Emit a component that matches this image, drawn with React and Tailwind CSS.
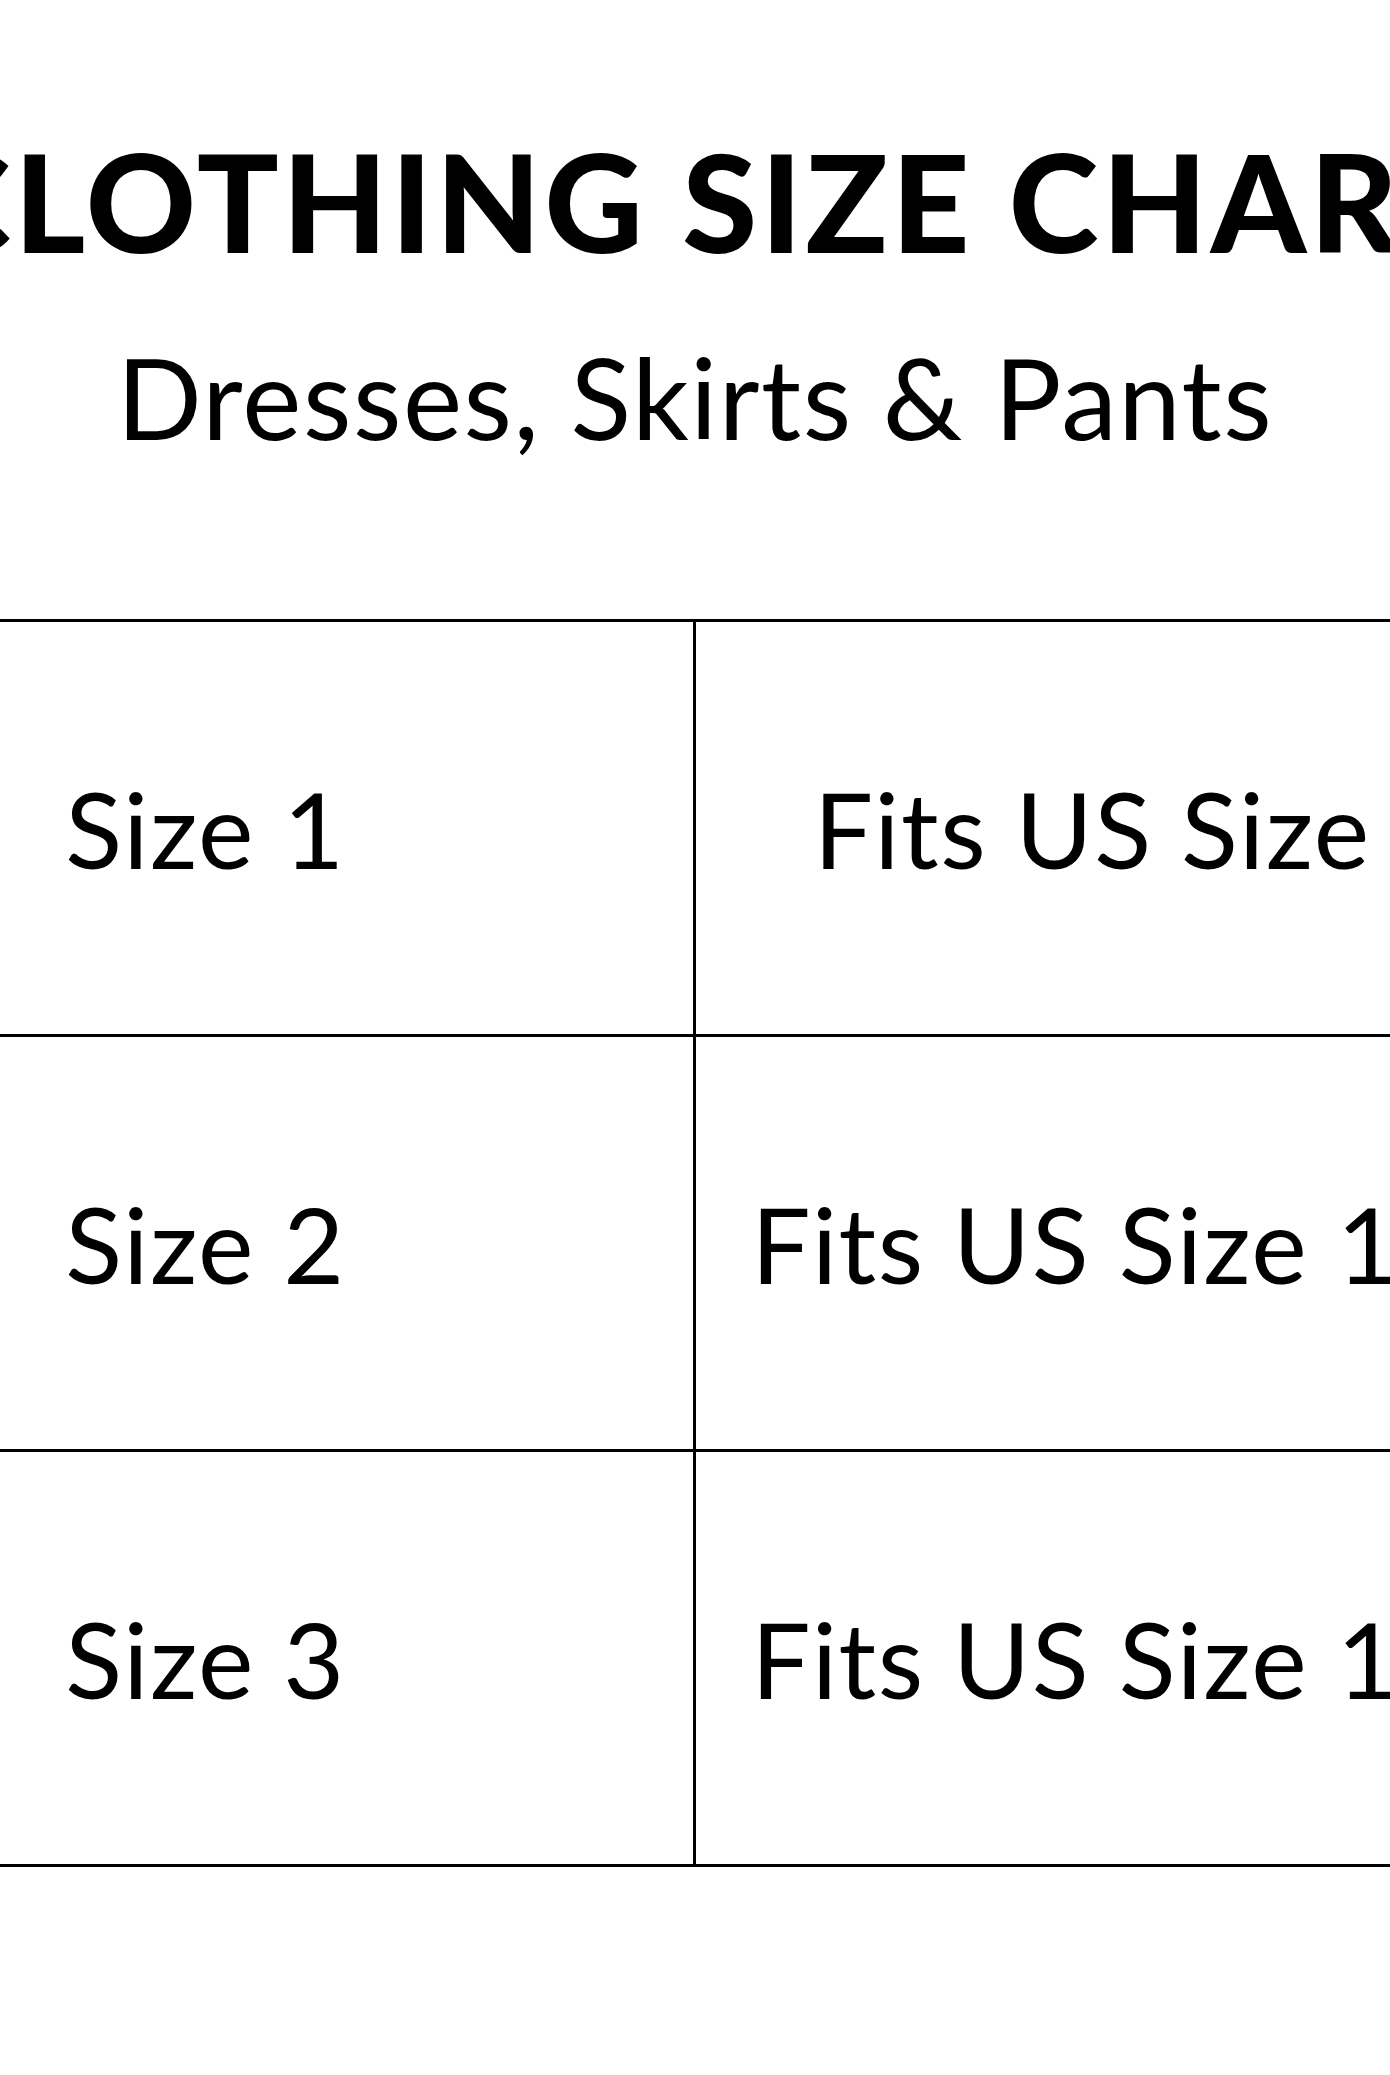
import React from 'react'

const rows = [
    { size: "Size 1", fits: "Fits US Size 4-8" },
    { size: "Size 2", fits: "Fits US Size 10-14" },
    { size: "Size 3", fits: "Fits US Size 16-20" },
];

const App = () => {
    return (
        <div className="w-[1390px] h-[2075px] bg-white text-black overflow-hidden font-['Lato','Liberation_Sans',sans-serif]">
            {/* Encabezado */}
            <div className="flex justify-center pt-[133px] pl-[16px]">
                <h1 className="flex-none whitespace-nowrap text-[136px] leading-[136px] font-black tracking-[3.5px]">
                    CLOTHING SIZE CHART
                </h1>
            </div>
            <div className="flex justify-center mt-[72px]">
                <p className="flex-none whitespace-nowrap text-[112px] leading-[112px] font-normal tracking-[1.5px]">
                    Dresses, Skirts &amp; Pants
                </p>
            </div>

            {/* Tabla */}
            <div className="flex mt-[166px]">
                <div className="flex-none -ml-[282px] w-[1964px] border-b-[3px] border-black">
                    {rows.map((r) => (
                        <div key={r.size} className="grid grid-cols-[978px_986px] h-[415px] border-t-[3px] border-black">
                            <div className="flex items-center justify-center border-r-[3px] border-black">
                                <span className="whitespace-nowrap text-[105px] leading-none font-normal tracking-[1.5px]">{r.size}</span>
                            </div>
                            <div className="flex items-center justify-center">
                                <span className="whitespace-nowrap text-[105px] leading-none font-normal tracking-[1.5px]">{r.fits}</span>
                            </div>
                        </div>
                    ))}
                </div>
            </div>
        </div>
    )
}

export default App
